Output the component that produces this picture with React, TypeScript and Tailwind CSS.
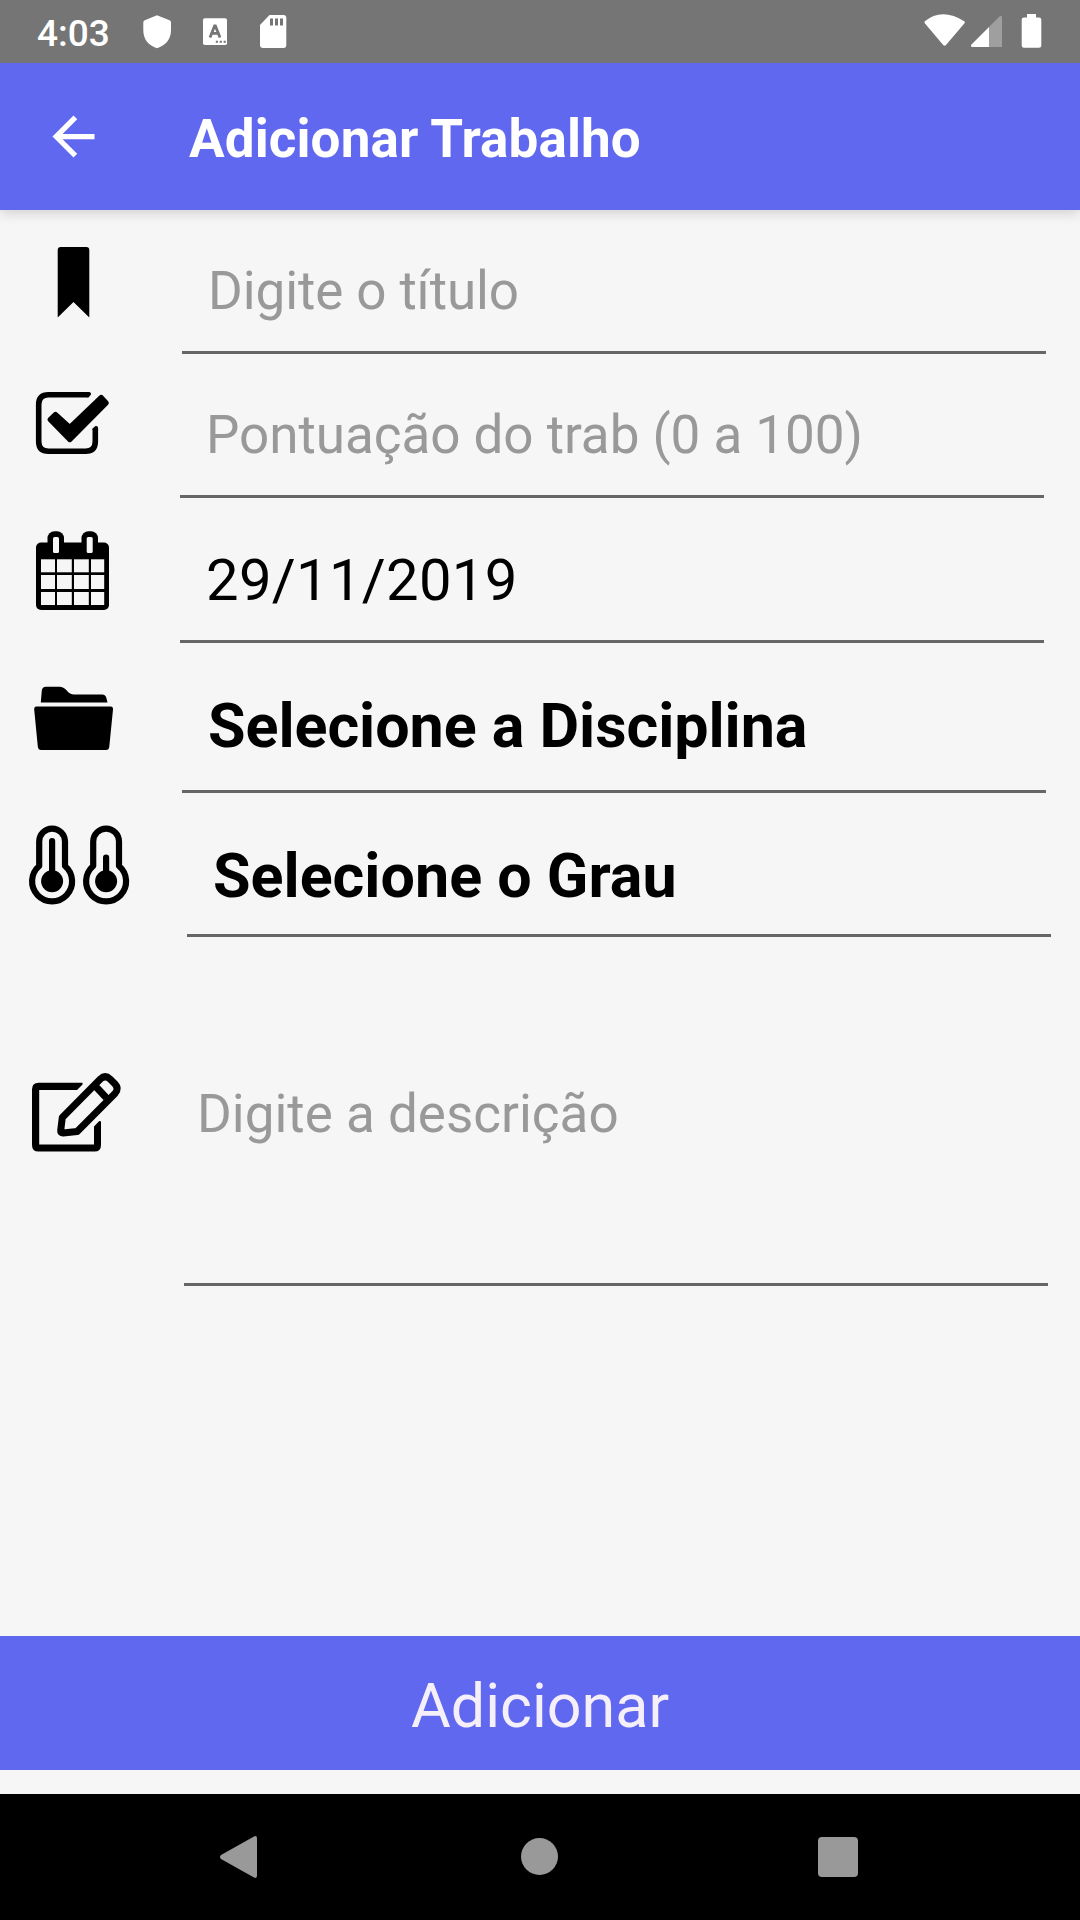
import type { ReactNode } from "react";

function StatusBar() {
  return (
    <div className="relative z-20 flex h-[63px] items-center justify-between bg-[#757575] text-white">
      <div className="flex h-full">
        <span className="w-[104px] shrink-0 pl-[37px] text-[37px] leading-[67px] font-medium">4:03</span>
        <svg className="ml-9" width="150" height="63" viewBox="140 0 150 63" fill="#fff">
          <path d="M157 15.3 169.5 20.2Q171 20.8 171 22.5V30C171 39.5 165.5 45.5 157 48.2 148.500 45.500 143.300 39.500 143.300 30V22.500Q143.300 20.800 144.800 20.200Z" />
          <rect x="203" y="18.300" width="24" height="26.700" rx="1.800" />
          <path d="m210 37.500 4.600-11.500h.8L220 37.500M211.800 33.300h6.400" fill="none" stroke="#757575" strokeWidth="2.800" />
          <path d="M215.800 40.800h2.200v2h-2.200zM219.700 40.800h2.200v2h-2.200zM223.600 40.800h2.200v2h-2.200z" fill="#757575" />
          <path d="M269.500 15H283.500Q286.300 15 286.300 18V45Q286.300 48 283.500 48H263Q260 48 260 45V25Z" />
          <path d="M270 18.500h3v7h-3zM275 18.500h3v7h-3zM280 18.500h3v7h-3z" fill="#757575" />
        </svg>
      </div>
      <svg width="180" height="63" viewBox="900 0 180 63" fill="#fff">
        <path d="M924.500 21.500Q942 7 964.700 21.500 965 22.500 964.300 23.500L946 45Q944.600 46.500 943.200 45L925 23.500Q924.200 22.500 924.500 21.500Z" />
        <path d="M989 27 999.500 16.500Q1002 14.700 1002 17.500V47H989Z" fill="#9f9f9f" />
        <path d="M989 27V47H972.500Q970 46.500 971.500 44.500Z" />
        <path d="M1027 14h9v3.500h3q2.300 0 2.300 2.300V45.500q0 2.300-2.300 2.300h-15q-2.300 0-2.300-2.300V19.800q0-2.300 2.300-2.300h3Z" />
      </svg>
    </div>
  );
}

function Header() {
  return (
    <header className="relative z-10 flex h-[147px] items-center bg-[#6068ef] text-white shadow-[0_3px_12px_rgba(0,0,0,0.16)]">
      <svg className="ml-[42px] shrink-0" width="63" height="63" viewBox="0 0 24 24" fill="currentColor">
        <path d="M20 11H7.830l5.590-5.590L12 4l-8 8 8 8 1.410-1.410L7.830 13H20v-2z" />
      </svg>
      <h1 className="pt-[5px] pl-[84px] text-[53px] leading-[80px] font-bold tracking-[0.1px] whitespace-nowrap">Adicionar Trabalho</h1>
    </header>
  );
}

type RowProps = { row: string; field: string; text: string; label: string; icon: ReactNode };

function Row({ row, field, text, label, icon }: RowProps) {
  return (
    <div className={`flex ${row}`}>
      <div className="w-[140px] shrink-0">{icon}</div>
      <div className={`w-[864px] shrink-0 border-b-[3px] border-[#666] ${field}`}>
        <div className={`leading-[80px] whitespace-nowrap ${text}`}>{label}</div>
      </div>
    </div>
  );
}

const bookmark = (
  <svg width="140" height="144" viewBox="0 210 140 144">
    <path d="M57.700 317.500V250q0-3 3-3H86.300q3 0 3 3V317.500L73.500 302Z" />
  </svg>
);

const checkSquare = (
  <svg width="140" height="144" viewBox="0 354 140 144">
    <path
      d="M87.500 394.800H48.500Q38.700 394.800 38.700 404.500V441.500Q38.700 451.200 48.500 451.200H85.500Q95.300 451.200 95.300 441.500V429"
      fill="none"
      stroke="#000"
      strokeWidth="5.600"
    />
    <path d="M87 392H89.500Q91.500 392.500 91 394.500L88.500 397.600H87ZM92.500 430V428.500L95.500 426Q98 425.500 98.100 428V430Z" />
    <path d="M50 419.500 55.500 414.300 69.800 427.300 101.200 397.300 106.300 403 69.800 439.700Z" stroke="#000" strokeWidth="5" strokeLinejoin="round" />
  </svg>
);

const calendarCols = [
  [41, 14],
  [57, 14.8],
  [74, 14.8],
  [91, 13.2],
];
const calendarRows = [
  [559.3, 13],
  [575, 14],
  [592, 13],
];

const calendar = (
  <svg width="140" height="145" viewBox="0 498 140 145">
    <rect x="36" y="542.500" width="73" height="67.500" rx="5" />
    <rect x="47.500" y="531.200" width="16.500" height="26" rx="7" />
    <rect x="81.500" y="531.200" width="16.500" height="26" rx="7" />
    <g fill="#f6f6f6">
      <rect x="53" y="537" width="6" height="16" rx="1.500" />
      <rect x="86.700" y="537" width="6" height="16" rx="1.500" />
      {calendarRows.map(([y, h]) =>
        calendarCols.map(([x, w]) => <rect key={`${x}-${y}`} x={x} y={y} width={w} height={h} />),
      )}
    </g>
  </svg>
);

const folder = (
  <svg width="140" height="150" viewBox="0 643 140 150">
    <path d="M40.800 702.500 41.800 690.500Q42.200 686.800 46 686.700H59.500Q63.500 686.700 66.500 690.200 70 694.500 74 694.600H102Q105.800 694.600 106.500 698.500L107.500 702.500Z" />
    <path d="M36.500 706.500H110.700Q113.200 706.500 113 709.500L109.300 746.500Q109 750 106 750H41Q38.200 750 37.800 746.500L34.200 709.500Q34 706.500 36.500 706.500Z" />
  </svg>
);

const thermometers = (
  <svg width="140" height="144" viewBox="0 793 140 144">
    <g fill="none" stroke="#000" strokeWidth="6.200" strokeLinejoin="round" strokeLinecap="round">
      <path d="M39.200 841.500a12.900 12.900 0 0 1 25.800 0V866A20 20 0 1 1 39.200 866Z" />
      <path d="M93.200 841.500a12.900 12.900 0 0 1 25.800 0V866A20 20 0 1 1 93.200 866Z" />
      <path d="M52.100 841V881M106.100 857.500V881" />
    </g>
    <circle cx="52.100" cy="881.200" r="11" />
    <circle cx="106.100" cy="881.200" r="11" />
  </svg>
);

const edit = (
  <svg width="140" height="349" viewBox="0 937 140 349">
    <path d="M82 1082.800H38.500Q32 1082.800 32 1089.300V1145Q32 1151.600 38.500 1151.600H94.500Q101 1151.600 101 1145V1122Q100.700 1120.300 99 1121.300L94 1126.500V1144.500H39.200V1090H77L82.300 1084.800Q83.300 1083 82 1082.800Z" />
    <path
      d="M62.300 1117.500 100.400 1079Q105.200 1074.500 110 1079L115 1084Q119.300 1088.500 115 1093.500L77.200 1131.500 63 1133Q60.500 1133 60.700 1130.500ZM96.700 1087.500 106 1097.500"
      fill="none"
      stroke="#000"
      strokeWidth="7"
      strokeLinejoin="round"
    />
  </svg>
);

export default function App() {
  return (
    <div className="flex h-[1920px] w-[1080px] flex-col overflow-hidden bg-[#f6f6f6] font-['Roboto',sans-serif] text-black">
      <StatusBar />
      <Header />
      <main className="flex-1">
        <Row row="h-[144px]" field="ml-[42px] pt-[41px] pl-[26px]" text="text-[53px] tracking-[-0.1px] text-[#999]" label="Digite o título" icon={bookmark} />
        <Row row="h-[144px]" field="ml-10 pt-[41px] pl-[26px]" text="text-[53px] tracking-[-0.04px] text-[#999]" label="Pontuação do trab (0 a 100)" icon={checkSquare} />
        <Row row="h-[145px]" field="ml-10 pt-[42px] pl-[26px]" text="text-[58px] tracking-[0.3px]" label="29/11/2019" icon={calendar} />
        <Row row="h-[150px]" field="ml-[42px] pt-[43px] pl-[26px]" text="text-[61px] font-bold tracking-[-0.05px]" label="Selecione a Disciplina" icon={folder} />
        <Row row="h-[144px]" field="ml-[47px] pt-[43px] pl-[26px]" text="text-[61px] font-bold" label="Selecione o Grau" icon={thermometers} />
        <Row row="h-[349px]" field="ml-11 pt-[137px] pl-[13px]" text="text-[53px] text-[#999]" label="Digite a descrição" icon={edit} />
      </main>
      <button className="mb-6 h-[134px] w-full shrink-0 bg-[#6068ef] pt-[5px] text-[61px] leading-[80px] text-[#f5effa]">Adicionar</button>
      <nav className="h-[126px] shrink-0 bg-black">
        <svg width="1080" height="126" viewBox="0 1794 1080 126" fill="#999">
          <path d="M221 1855 254 1836.500Q257 1835 257 1838.500V1875.500Q257 1879 254 1877.500L221 1859Q219 1857 221 1855Z" />
          <circle cx="539.500" cy="1856.500" r="18.500" />
          <rect x="818" y="1837" width="40" height="40" rx="4" />
        </svg>
      </nav>
    </div>
  );
}
